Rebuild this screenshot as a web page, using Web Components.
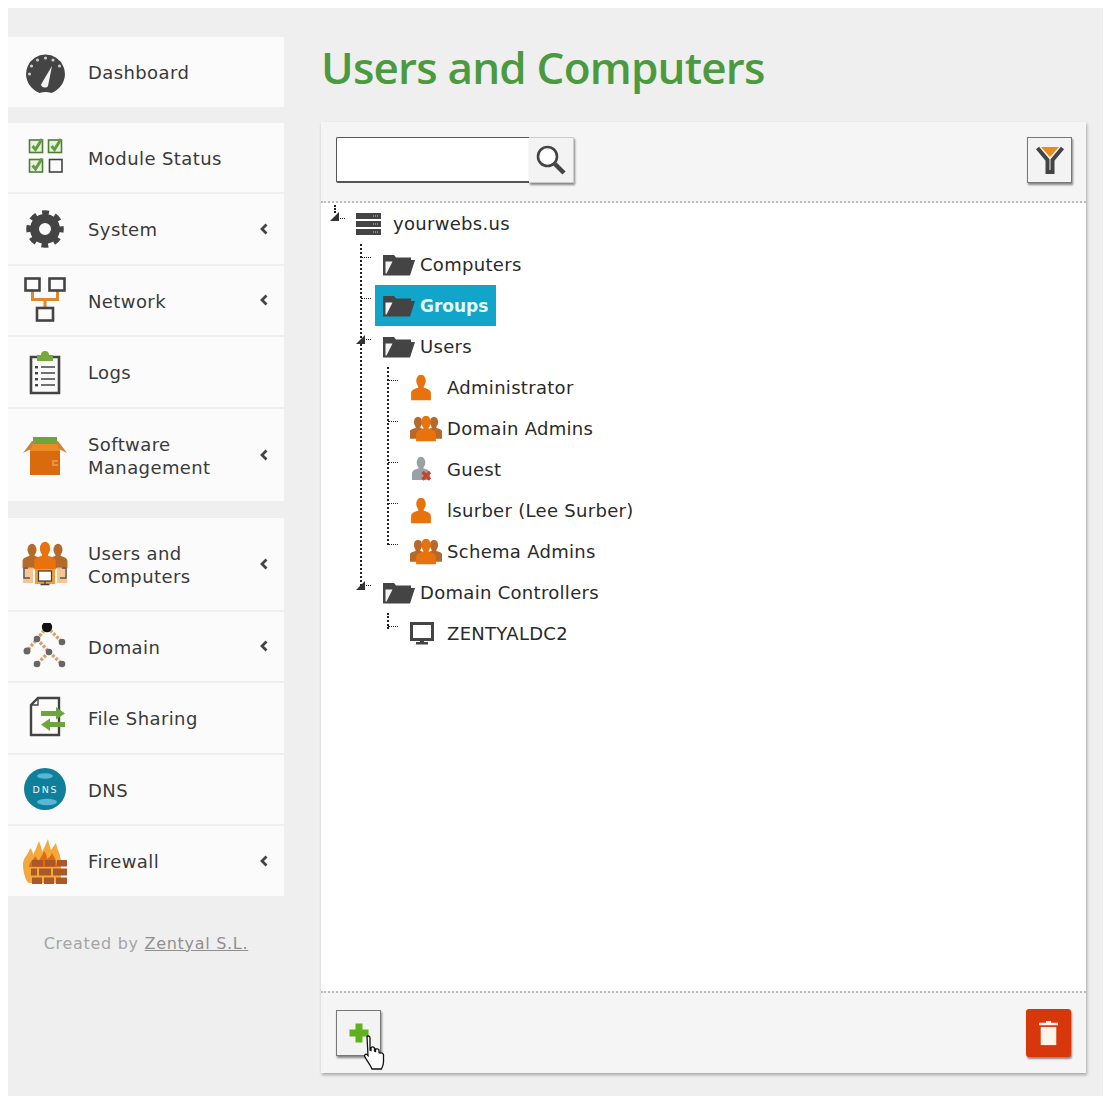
<!DOCTYPE html>
<html>
<head>
<meta charset="utf-8">
<title>Users and Computers</title>
<style>
  body { margin: 8px; background: #fff; font-family: "DejaVu Sans", sans-serif; color: #333; }
  z-nav-group.last { margin-top: 1px; }
</style>
</head>
<body>
<z-app>
  <z-sidebar slot="nav">
    <z-nav-group>
      <z-nav-item icon="dashboard">Dashboard</z-nav-item>
    </z-nav-group>
    <z-nav-group>
      <z-nav-item icon="modules">Module Status</z-nav-item>
      <z-nav-item icon="gear" arrow>System</z-nav-item>
      <z-nav-item icon="network" arrow>Network</z-nav-item>
      <z-nav-item icon="logs">Logs</z-nav-item>
      <z-nav-item icon="box" arrow tall>Software<br>Management</z-nav-item>
    </z-nav-group>
    <z-nav-group class="last">
      <z-nav-item icon="people" arrow tall>Users and<br>Computers</z-nav-item>
      <z-nav-item icon="domain" arrow>Domain</z-nav-item>
      <z-nav-item icon="files">File Sharing</z-nav-item>
      <z-nav-item icon="dns">DNS</z-nav-item>
      <z-nav-item icon="fire" arrow>Firewall</z-nav-item>
    </z-nav-group>
    <z-credit></z-credit>
  </z-sidebar>
  <z-panel title-text="Users and Computers">
    <z-tree-node icon="server" label="yourwebs.us" open trail="68" root>
      <z-tree-node icon="folder" label="Computers"></z-tree-node>
      <z-tree-node icon="folder" label="Groups" selected></z-tree-node>
      <z-tree-node icon="folder" label="Users" open trail="27">
        <z-tree-node icon="user" label="Administrator"></z-tree-node>
        <z-tree-node icon="group" label="Domain Admins"></z-tree-node>
        <z-tree-node icon="guest" label="Guest"></z-tree-node>
        <z-tree-node icon="user" label="lsurber (Lee Surber)"></z-tree-node>
        <z-tree-node icon="group" label="Schema Admins"></z-tree-node>
      </z-tree-node>
      <z-tree-node icon="folder" label="Domain Controllers" open trail="25">
        <z-tree-node icon="monitor" label="ZENTYALDC2"></z-tree-node>
      </z-tree-node>
    </z-tree-node>
  </z-panel>
</z-app>

<script>
const DARK = "#444";
const ORANGE = "#e8720c";
const BROWN = "#b5692a";

const person = (x, y, s, c) =>
  `<g transform="translate(${x} ${y}) scale(${s})" fill="${c}"><ellipse cx="0" cy="5.500" rx="4.300" ry="5.800"/><path d="M-2.500 9h5v2.500c3 .8 6.500 1.800 6.500 5v6.500h-18v-6.500c0-3.200 3.500-4.200 6.500-5z"/></g>`;

const ICONS = {
  dashboard: `<svg width="46" height="46" viewBox="0 0 46 46"><path d="M23.500 5.500a19.500 19.500 0 0 1 14 33c-2.500 2.500-5 4.500-8 5.500-2-.5-4-1-6-1s-4 .5-6 1c-3-1-5.500-3-8-5.500a19.500 19.500 0 0 1 14-33z" fill="${DARK}"/><g fill="#ccc"><circle cx="23.500" cy="9" r="1.600"/><circle cx="15.500" cy="11" r="1.600"/><circle cx="31" cy="11" r="1.600"/><circle cx="9.500" cy="17" r="1.600"/><circle cx="37.500" cy="17" r="1.600"/><circle cx="7.500" cy="25" r="1.600"/></g><path d="M30 17l-4 20c-1.500 2.500-7 2-7-1.500z" fill="#f4f4f4"/></svg>`,
  modules: `<svg width="46" height="46" viewBox="0 0 46 46"><g fill="#e9f1df" stroke="#4f7d3a" stroke-width="1.600"><rect x="7.500" y="6" width="13" height="12.500"/><rect x="26.500" y="6" width="13" height="12.500"/><rect x="7.500" y="25.500" width="13" height="12.500"/></g><rect x="27.500" y="25.500" width="12.500" height="12.500" fill="none" stroke="${DARK}" stroke-width="1.600"/><g fill="none" stroke="#5f9e3b" stroke-width="3"><path d="M10.500 12l3 3.500 6.500-10.500"/><path d="M29.500 12l3 3.500 6.500-10.500"/><path d="M10.500 31.500l3 3.500 6.500-10.500"/></g></svg>`,
  gear: `<svg width="46" height="46" viewBox="0 0 46 46"><circle cx="23" cy="23" r="10.500" fill="none" stroke="${DARK}" stroke-width="9"/><circle cx="23" cy="23" r="15.500" fill="none" stroke="${DARK}" stroke-width="6.500" stroke-dasharray="6.500 5.675" stroke-dashoffset="3.250"/></svg>`,
  network: `<svg width="46" height="46" viewBox="0 0 46 46"><path d="M10.500 14v8.500h25V14M23 22.500V30" fill="none" stroke="#dc8a2e" stroke-width="3"/><g fill="none" stroke="${DARK}" stroke-width="2.600"><rect x="3.500" y="1.500" width="14" height="12"/><rect x="27.500" y="1.500" width="15" height="12"/><rect x="15" y="31" width="16" height="12.500"/></g></svg>`,
  logs: `<svg width="46" height="46" viewBox="0 0 46 46"><path d="M15 8H9v36h28V8H31" fill="#fafafa" stroke="${DARK}" stroke-width="2.600"/><path d="M15 12V6h4a4 4 0 0 1 8 0h4v6z" fill="#76a83d"/><g stroke="${DARK}" stroke-width="1.600"><path d="M19 18h14M19 24h14M19 30h14M19 36h14"/></g><g fill="${DARK}"><rect x="13" y="17" width="3" height="2.400"/><rect x="13" y="23" width="3" height="2.400"/><rect x="13" y="29" width="3" height="2.400"/><rect x="13" y="35" width="3" height="2.400"/></g></svg>`,
  box: `<svg width="46" height="46" viewBox="0 0 46 46"><path d="M11 5h24v9H11z" fill="#6ea53b"/><path d="M8 12h30v31H8z" fill="#d96b0e"/><path d="M8 12h30v7H8z" fill="#ee8a24"/><path d="M1 21L10 9h3l-4 8zM45 21L36 9h-3l4 8z" fill="#c8823c"/><path d="M30 28h6v2h-4v2h4v2h-6z" fill="#e98f46"/></svg>`,
  people: `<svg width="46" height="46" viewBox="0 0 46 46">${person(10, 3, 1.050, BROWN)}${person(36, 3, 1.050, BROWN)}${person(23, 1, 1.200, ORANGE)}<path d="M1 26h10v16H1zM35 26h10v16H35z" fill="#f2a24e" opacity=".6"/><g fill="none" stroke="#555" stroke-width="1.400"><path d="M6 27H2v10h6"/><path d="M40 27h4v10h-6"/></g><rect x="13" y="28" width="20" height="15" fill="#f79a33"/><rect x="16.500" y="30" width="13" height="10" fill="#fff" stroke="#444" stroke-width="1.300"/><path d="M23 40v3M18.500 43.500h9" stroke="#444" stroke-width="1.300"/></svg>`,
  domain: `<svg width="46" height="46" viewBox="0 0 46 46"><g stroke="#cfa67c" stroke-width="3.400" stroke-dasharray="3 1.400" fill="none"><path d="M25 4L5 28M25 4L40 19M27 29L15 41M27 29L40 41M15 16L27 29"/></g><g fill="#666"><circle cx="40" cy="19" r="3.300"/><circle cx="15" cy="16" r="3.300"/><circle cx="5" cy="28" r="3.500"/><circle cx="27" cy="29" r="3.300"/><circle cx="15" cy="41" r="3.300"/><circle cx="40" cy="41" r="3.300"/></g><circle cx="25" cy="4" r="5.200" fill="#111"/></svg>`,
  files: `<svg width="46" height="46" viewBox="0 0 46 46"><path d="M16 3h21v37H9V10z" fill="#fcfcfc" stroke="${DARK}" stroke-width="2.400"/><path d="M16 3v7H9" fill="none" stroke="${DARK}" stroke-width="1.400"/><path d="M19 16h15v-4l9 6.500-9 6V21H19z" fill="#6ea53b"/><path d="M43 27H28v-3.500l-9 6 9 6.500v-4h15z" fill="#6ea53b"/></svg>`,
  dns: `<svg width="46" height="46" viewBox="0 0 46 46"><circle cx="23" cy="23" r="21" fill="#0f7f9c"/><ellipse cx="23" cy="10" rx="8" ry="2.800" fill="#58b8d3"/><ellipse cx="25" cy="36" rx="10" ry="3.200" fill="#58b8d3"/><text x="23.500" y="27" text-anchor="middle" font-family="DejaVu Sans, sans-serif" font-size="9.500" letter-spacing="1.800" fill="#e6f6fa">DNS</text></svg>`,
  fire: `<svg width="46" height="46" viewBox="0 0 46 46"><path d="M1 29C0 19 7 17 8 10c2 2 3 4 3 7 2-4 4-9 6-14 1 4 3 7 3 11 2-4 4-8 6-13 1 5 2 8 3 11 2-2 3-5 5-7 1 6 4 10 5 18v22H8C4 45 2 37 1 29z" fill="#f4a93c"/><path d="M7 29c0-6 5-7 6-11 2 2 3 4 3 6 2-4 5-7 6-11 2 3 3 5 3 8 2-2 4-3 5-6 2 4 5 7 5 14z" fill="#e06a10"/><g fill="#a9582a"><path d="M10 22h11v6.500H10zM23 22h10v6.500H23zM35 22h10v6.500H35zM9 30.500h6v7H9zM17 30.500h12v7H17zM31 30.500h14v7H31zM10 39.500h10V46H10zM22 39.500h10V46H22zM34 39.500h11V46H34z"/></g></svg>`,
  server: `<svg width="25" height="22" viewBox="0 0 25 22"><g fill="${DARK}"><rect width="25" height="6"/><rect y="8" width="25" height="6"/><rect y="16" width="25" height="6"/></g><path d="M17 3h6M17 11h6M17 19h6" stroke="#ccc" stroke-dasharray="1 1"/></svg>`,
  folder: `<svg width="32" height="22" viewBox="0 0 32 22"><path d="M0 1h11l2 2.500h15V6h4l-5 15.500H0z" fill="${DARK}"/><path d="M2.500 7.500H9.500L3.500 19.500h-1z" fill="#f4f4f4"/></svg>`,
  user: `<svg width="24" height="26" viewBox="0 0 24 26">${person(11, 0, 1.100, ORANGE)}</svg>`,
  group: `<svg width="32" height="26" viewBox="0 0 32 26">${person(8, 1, .95, BROWN)}${person(24, 1, .95, BROWN)}${person(16, 0, 1.100, ORANGE)}</svg>`,
  guest: `<svg width="24" height="26" viewBox="0 0 24 26">${person(11, 0, 1, "#9aa1a6")}<path d="M12.500 15l7.500 7.500m0-7.500l-7.500 7.500" stroke="#c8432a" stroke-width="3.200"/></svg>`,
  monitor: `<svg width="24" height="24" viewBox="0 0 24 24"><rect x="1.500" y="1.500" width="21" height="16" fill="#fff" stroke="${DARK}" stroke-width="3"/><path d="M10 18h4v2h4v2.500H6V20h4z" fill="${DARK}"/></svg>`,
  search: `<svg width="34" height="34" viewBox="0 0 34 34"><circle cx="13.500" cy="13.500" r="9.500" fill="#fff" stroke="${DARK}" stroke-width="2.600"/><path d="M21 21l9 9" stroke="${DARK}" stroke-width="4.500"/></svg>`,
  filter: `<svg width="30" height="30" viewBox="0 0 30 30"><path d="M2.500 3l10 12v12h5V15l10-12" fill="none" stroke="${DARK}" stroke-width="4"/><path d="M6 2h18l-9 10z" fill="#ee8a1a"/></svg>`,
  plus: `<svg width="22" height="22" viewBox="0 0 22 22"><path d="M7.500 1.500h7v6h6v7h-6v6h-7v-6h-6v-7h6z" fill="#62b01f"/></svg>`,
  trash: `<svg width="19" height="26" viewBox="0 0 22 30"><path d="M8 1h6v2h8v3H0V3h8z" fill="#fff4ea"/><path d="M2 8h18v21H2z" fill="#fff4ea"/></svg>`,
  hand: `<svg width="24" height="36" viewBox="0 0 24 36"><path d="M3 1.500c1.500-1 3-.5 3 1.500v12l1 .5v-3c2-1 3.500-.5 3.500 1v2.500l1 .5v-2.500c2-.5 3.500 0 3.500 1.500v2l1 .5c2-.5 3.500.5 3.500 2v7c0 3-1 5-2 7H8c-1-3-5-8-7-12-1-2 .5-3.500 2-2.500l1 1z" fill="#fff" stroke="#111" stroke-width="1.300"/></svg>`
};

class ZIcon extends HTMLElement {
  static get observedAttributes() {
    return ["name"];
  }

  constructor() {
    super();
    this.attachShadow({ mode: "open" });
  }

  attributeChangedCallback() {
    this.shadowRoot.innerHTML = `
    <style>
      :host { display: inline-flex; align-items: center; justify-content: center; }
      svg { display: block; }
    </style>
    ${ICONS[this.getAttribute("name")] || ""}`;
  }
}

class ZApp extends HTMLElement {
  constructor() {
    super();
    this.attachShadow({ mode: "open" });
    this.shadowRoot.innerHTML = `
    <style>
      :host {
        display: grid;
        grid-template-columns: 276px 1fr;
        column-gap: 37px;
        width: 1095px;
        height: 1088px;
        box-sizing: border-box;
        padding: 0 17px 23px 0;
        background: #efefef;
      }
    </style>
    <slot name="nav"></slot>
    <slot></slot>`;
  }
}

class ZSidebar extends HTMLElement {
  constructor() {
    super();
    this.attachShadow({ mode: "open" });
    this.shadowRoot.innerHTML = `
    <style>
      :host {
        display: flex;
        flex-direction: column;
        gap: 16px;
        padding-top: 29px;
      }
    </style>
    <slot></slot>`;
  }
}

class ZNavGroup extends HTMLElement {
  constructor() {
    super();
    this.attachShadow({ mode: "open" });
    this.shadowRoot.innerHTML = `
    <style>
      :host { display: flex; flex-direction: column; gap: 2px; }
    </style>
    <slot></slot>`;
  }
}

class ZNavItem extends HTMLElement {
  constructor() {
    super();
    this.attachShadow({ mode: "open" });
    this.shadowRoot.innerHTML = `
    <style>
      :host {
        display: flex;
        align-items: center;
        height: 69.500px;
        padding: 0 14px;
        background: #fbfbfb;
        font-size: 18px;
        line-height: 23px;
        letter-spacing: .4px;
        color: #3a3a3a;
      }
      :host([tall]) { height: 92px; }
      z-icon { width: 46px; height: 46px; flex: none; margin-right: 20px; }
      .label { flex: 1; padding-top: 2px; }
      .arrow { width: 8px; height: 12px; flex: none; margin-right: 2px; }
    </style>
    <z-icon></z-icon>
    <div class="label"><slot></slot></div>`;
  }

  connectedCallback() {
    this.shadowRoot.querySelector("z-icon").setAttribute("name", this.getAttribute("icon"));
    if (this.hasAttribute("arrow") && !this.shadowRoot.querySelector(".arrow")) {
      this.shadowRoot.appendChild(document.createRange().createContextualFragment(
        `<svg class="arrow" viewBox="0 0 8 12"><path d="M6.500 1.500L2 6l4.500 4.500" fill="none" stroke="#444" stroke-width="2.800"/></svg>`));
    }
  }
}

class ZCredit extends HTMLElement {
  constructor() {
    super();
    this.attachShadow({ mode: "open" });
    this.shadowRoot.innerHTML = `
    <style>
      :host {
        display: block;
        margin-top: 22px;
        text-align: center;
        font-size: 16px;
        letter-spacing: .7px;
        color: #a5a5a5;
      }
      a { color: #8f8f8f; }
    </style>
    Created by <a href="#">Zentyal S.L.</a>`;
  }
}

class ZPanel extends HTMLElement {
  constructor() {
    super();
    this.attachShadow({ mode: "open" });
    this.shadowRoot.innerHTML = `
    <style>
      :host { display: flex; flex-direction: column; min-width: 0; }
      h1 {
        margin: 0;
        height: 114px;
        box-sizing: border-box;
        padding-top: 30px;
        font: 600 44px/58px "Open Sans", sans-serif;
        letter-spacing: -.8px;
        color: #4b9a3f;
      }
      .box {
        flex: 1;
        display: flex;
        flex-direction: column;
        background: #f5f5f5;
        box-shadow: 1px 2px 3px rgba(0,0,0,.3);
      }
      .bar {
        display: flex;
        justify-content: space-between;
        align-items: center;
        padding: 0 14px 0 15px;
      }
      .top { height: 81px; box-sizing: border-box; padding-bottom: 3px; border-bottom: 2px dotted #bbb; }
      .bottom { height: 82px; box-sizing: border-box; border-top: 2px dotted #bbb; }
      .tree { flex: 1; background: #fff; font-size: 18px; letter-spacing: .3px; color: #2a2a2a; }
      .search { display: flex; }
      input {
        width: 193px;
        height: 46px;
        box-sizing: border-box;
        border: 1px solid #555;
        border-bottom-width: 2px;
        border-right: 0;
        border-radius: 2px 0 0 2px;
        background: #fff;
        outline: 0;
      }
      button {
        position: relative;
        display: flex;
        align-items: center;
        justify-content: center;
        width: 45px;
        height: 46px;
        padding: 0;
        border: 1px solid #777;
        background: #f3f3f3;
        box-shadow: 1px 2px 2px rgba(0,0,0,.45);
      }
      .search button { border-left: 0; border-color: #ccc; }
      button.danger { background: #d8370b; border: 0; border-radius: 3px; height: 48px; margin-right: 1px; }
      .hand { position: absolute; left: 27px; top: 24px; }
    </style>
    <h1></h1>
    <div class="box">
      <div class="bar top">
        <div class="search">
          <input type="text" aria-label="Search">
          <button aria-label="Search"><z-icon name="search"></z-icon></button>
        </div>
        <button aria-label="Filter"><z-icon name="filter"></z-icon></button>
      </div>
      <div class="tree"><slot></slot></div>
      <div class="bar bottom">
        <button aria-label="Add"><z-icon name="plus"></z-icon><z-icon class="hand" name="hand"></z-icon></button>
        <button class="danger" aria-label="Delete"><z-icon name="trash"></z-icon></button>
      </div>
    </div>`;
  }

  connectedCallback() {
    this.shadowRoot.querySelector("h1").textContent = this.getAttribute("title-text");
  }
}

class ZTreeNode extends HTMLElement {
  constructor() {
    super();
    this.attachShadow({ mode: "open" });
    this.shadowRoot.innerHTML = `
    <style>
      :host { display: block; position: relative; }
      .row {
        position: relative;
        display: flex;
        align-items: center;
        height: 41px;
        padding-left: 27px;
      }
      .item {
        display: flex;
        align-items: center;
        height: 41px;
        padding: 0 8px;
      }
      z-icon { width: 37px; justify-content: flex-start; }
      :host([selected]) .item {
        background: #10a5c9;
        color: #e4fbff;
        font-size: 17px;
        font-weight: 700;
        letter-spacing: 0;
      }
      /* connector stub */
      .row::before {
        content: "";
        position: absolute;
        left: 13px;
        top: 13px;
        width: 10px;
        border-top: 1px dotted #222;
      }
      :host([root]) .row::before { left: 16px; top: 15px; width: 8px; }
      :host([root]) .row::after {
        content: "";
        position: absolute;
        left: 13px;
        top: 2px;
        height: 8px;
        border-left: 2px dotted #222;
      }
      .twisty {
        display: none;
        position: absolute;
        left: 8px;
        top: 9px;
        width: 0;
        height: 0;
        border-left: 9px solid transparent;
        border-bottom: 9px solid #333;
      }
      :host([open]) .twisty { display: block; }
      :host([root]) .twisty { left: 9px; top: 9px; }
      .kids { position: relative; padding-left: 27px; }
      .kids::before {
        content: "";
        position: absolute;
        left: 39px;
        top: 0;
        bottom: var(--trail, 0);
        border-left: 2px dotted #222;
      }
      :host(:not([open])) .kids { display: none; }
    </style>
    <div class="row">
      <span class="twisty"></span>
      <div class="item"><z-icon></z-icon><span class="label"></span></div>
    </div>
    <div class="kids"><slot></slot></div>`;
  }

  connectedCallback() {
    this.shadowRoot.querySelector("z-icon").setAttribute("name", this.getAttribute("icon"));
    this.shadowRoot.querySelector(".label").textContent = this.getAttribute("label");
    this.shadowRoot.querySelector(".kids").style.setProperty("--trail", (this.getAttribute("trail") || 0) + "px");
  }
}

customElements.define("z-icon", ZIcon);
customElements.define("z-app", ZApp);
customElements.define("z-sidebar", ZSidebar);
customElements.define("z-nav-group", ZNavGroup);
customElements.define("z-nav-item", ZNavItem);
customElements.define("z-credit", ZCredit);
customElements.define("z-panel", ZPanel);
customElements.define("z-tree-node", ZTreeNode);
</script>
</body>
</html>
